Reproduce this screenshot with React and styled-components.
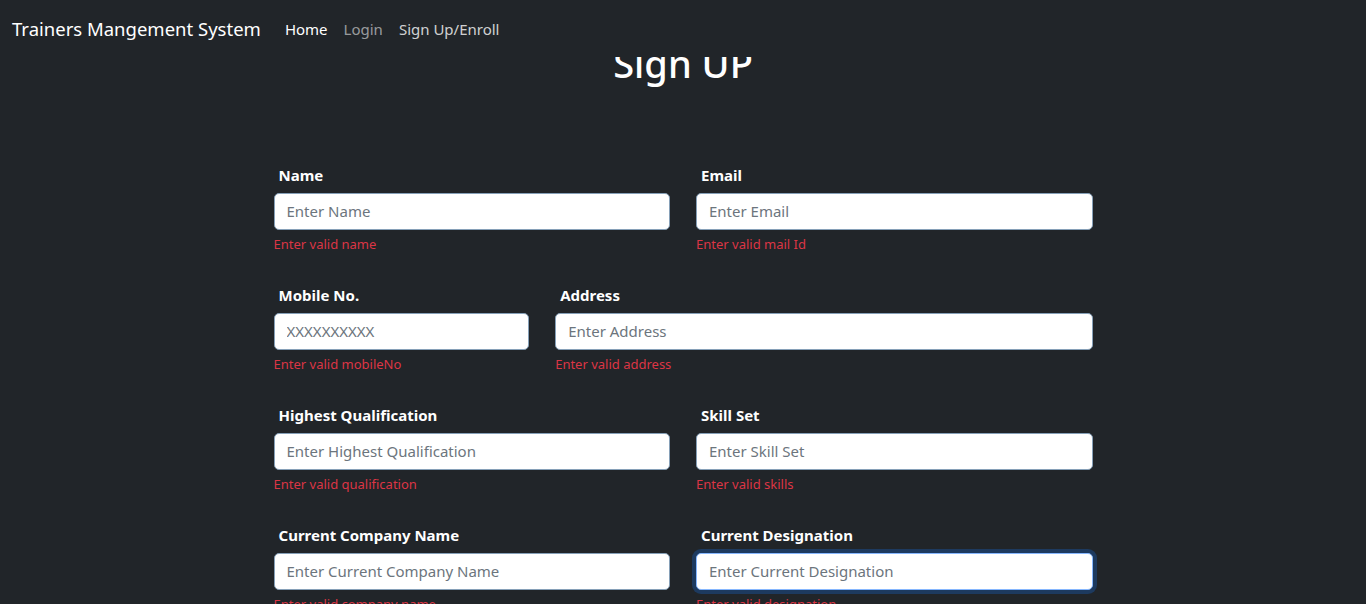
import React from 'react';
import styled, { createGlobalStyle, css } from 'styled-components';

const GlobalStyle = createGlobalStyle`
  html, body {
    margin: 0;
    padding: 0;
    background-color: #212529;
    font-family: "Noto Sans", "Open Sans", sans-serif;
    color: #fff;
  }
  * {
    box-sizing: border-box;
  }
`;

const fields = [
  [
    { label: 'Name', placeholder: 'Enter Name', error: 'Enter valid name', span: 6 },
    { label: 'Email', placeholder: 'Enter Email', error: 'Enter valid mail Id', span: 6 },
  ],
  [
    { label: 'Mobile No.', placeholder: 'XXXXXXXXXX', error: 'Enter valid mobileNo', span: 4 },
    { label: 'Address', placeholder: 'Enter Address', error: 'Enter valid address', span: 8 },
  ],
  [
    { label: 'Highest Qualification', placeholder: 'Enter Highest Qualification', error: 'Enter valid qualification', span: 6 },
    { label: 'Skill Set', placeholder: 'Enter Skill Set', error: 'Enter valid skills', span: 6 },
  ],
  [
    { label: 'Current Company Name', placeholder: 'Enter Current Company Name', error: 'Enter valid company name', span: 6 },
    { label: 'Current Designation', placeholder: 'Enter Current Designation', error: 'Enter valid designation', span: 6, focused: true },
  ],
];

const App = () => {
  return (
    <>
      <GlobalStyle />
      <Navbar>
        <Brand href="#">Trainers Mangement System</Brand>
        <NavLinks>
          <NavLink href="#" tone="active">Home</NavLink>
          <NavLink href="#" tone="muted">Login</NavLink>
          <NavLink href="#" tone="light">Sign Up/Enroll</NavLink>
        </NavLinks>
      </Navbar>

      <Page>
        <Title>Sign UP</Title>
        <Form>
          {fields.map((row, i) => (
            <Row key={i}>
              {row.map((f) => (
                <Field key={f.label} span={f.span}>
                  <Label>{f.label}</Label>
                  <Input placeholder={f.placeholder} focused={f.focused} autoFocus={f.focused} />
                  <Error>{f.error}</Error>
                </Field>
              ))}
            </Row>
          ))}
        </Form>
      </Page>
    </>
  );
};

const Navbar = styled.nav`
  position: fixed;
  top: 0;
  left: 0;
  width: 100%;
  height: 57px;
  display: flex;
  align-items: center;
  padding: 0 12px;
  background-color: #212529;
  z-index: 100;
`;

const Brand = styled.a`
  font-size: 18.5px;
  color: #fff;
  text-decoration: none;
  margin-right: 24px;
`;

const NavLinks = styled.div`
  display: flex;
  gap: 16px;
`;

const NavLink = styled.a`
  font-size: 15px;
  text-decoration: none;
  color: ${({ tone }) =>
    tone === 'active' ? '#fff' : tone === 'muted' ? 'rgba(255,255,255,0.55)' : 'rgba(255,255,255,0.8)'};
`;

const Page = styled.main`
  padding-top: 41px;
  padding-bottom: 40px;
`;

const Title = styled.h1`
  margin: 0;
  text-align: center;
  font-size: 38px;
  font-weight: 500;
  line-height: 1.2;
`;

const Form = styled.form`
  width: 819px;
  margin: 77px auto 0;
  display: flex;
  flex-direction: column;
  gap: 30px;
`;

const Row = styled.div`
  display: grid;
  grid-template-columns: repeat(12, 1fr);
  margin-right: -26px;
`;

const Field = styled.div`
  grid-column: span ${({ span }) => span};
  padding-right: 26px;
  display: flex;
  flex-direction: column;
`;

const Label = styled.label`
  font-size: 15px;
  font-weight: 700;
  padding-left: 5px;
  line-height: 22px;
  margin-bottom: 7px;
`;

const Input = styled.input`
  height: 37px;
  width: 100%;
  padding: 0 12px;
  font-family: inherit;
  font-size: 15px;
  color: #212529;
  background: #fff;
  border: 1px solid #86a0b8;
  border-radius: 5px;
  outline: none;
  caret-color: #212529;

  &::placeholder {
    color: #6c757d;
  }

  ${({ focused }) =>
    focused &&
    css`
      border-color: #86b7fe;
      box-shadow: 0 0 0 4px #1d3a5f;
    `}
`;

const Error = styled.div`
  font-size: 13px;
  color: #dc3545;
  line-height: 20px;
  margin-top: 4px;
`;

export default App;
